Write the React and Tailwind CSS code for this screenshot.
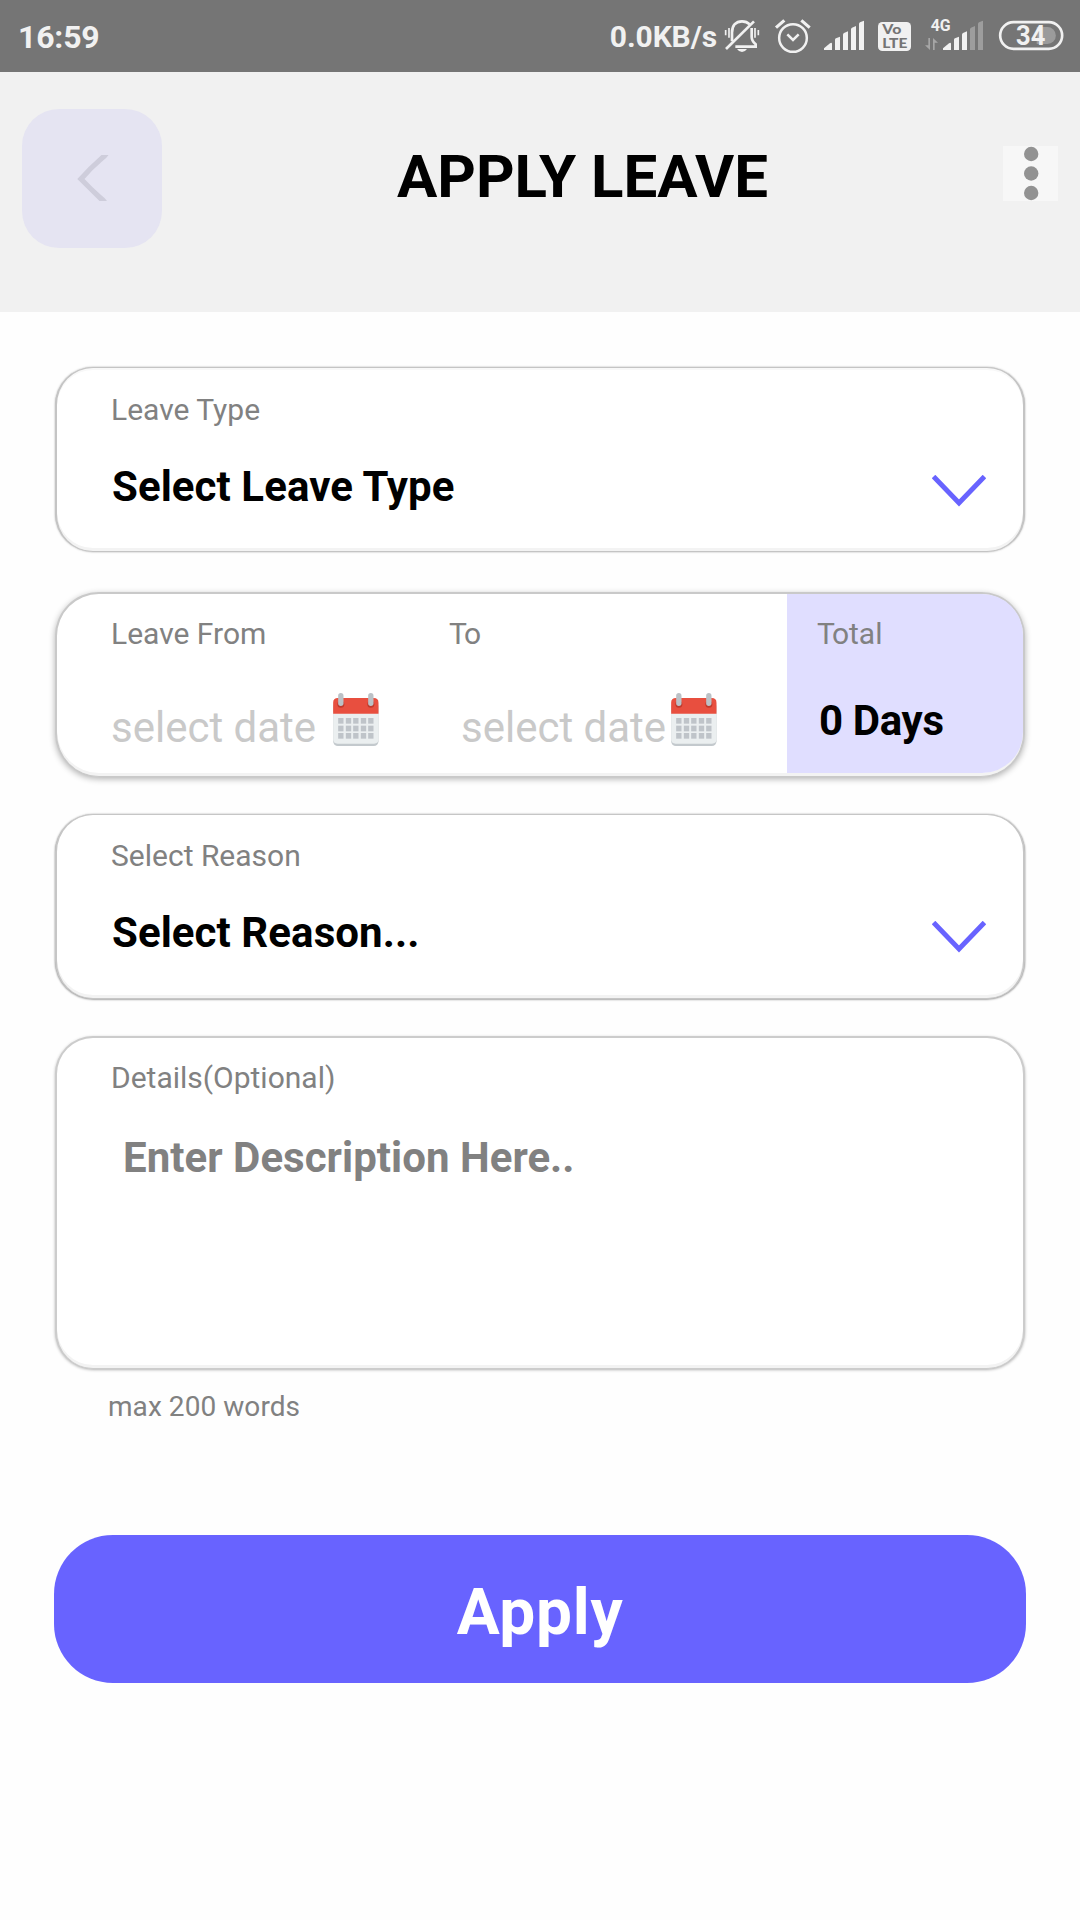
function BellOff() {
  return (
    <svg viewBox="372 54 108 108" className="-mb-[3px] ml-[7px] h-[36px] w-[36px]" fill="none" stroke="#f1f1f1" strokeWidth="8">
      <path d="M396 124V98C396 76 408 64 426 64C435 64 443 67 449 73" />
      <path d="M455 84V110C455 122 459 126 467 133V140H406" />
      <path d="M378 147L462 64" />
      <path d="M411 147H441Q435 156 426 156T411 147Z" fill="#f1f1f1" stroke="none" />
      <path d="M377 90V106M387 84V113M465 84V113M475 90V106" strokeWidth="5" />
    </svg>
  );
}

function Alarm() {
  return (
    <svg viewBox="522 54 114 108" className="-mb-[3px] ml-[14px] h-[36px] w-[38px]" fill="none" stroke="#f1f1f1" strokeWidth="7.500">
      <circle cx="579" cy="114" r="41.500" />
      <path d="M528 83L553 61M604 61L629 83" strokeWidth="9.500" />
      <path d="M562 103L579 120L596 103" />
    </svg>
  );
}

const barPaths = [
  "M12 150V145L30 130Q36 126 36 132V150Z",
  "M45 150V119Q45 116 48 115L60 110V150Z",
  "M69 150V103Q69 101 72 99L84 94V150Z",
  "M93 150V87Q93 85 96 83L108 78V150Z",
  "M117 150V72Q117 69 120 67L132 62V150Z",
];

function SignalBars({ active = 5 }) {
  return barPaths.map((d, i) => <path key={d} d={d} fill={i < active ? "#f1f1f1" : "#9d9d9d"} />);
}

function Volte() {
  return (
    <svg viewBox="174 66 99 87" className="ml-[13px] h-[29px] w-[33px]">
      <rect x="174" y="66" width="99" height="87" rx="13" fill="#f1f1f1" />
      <g fill="#757575" fontFamily="Lato, sans-serif" fontWeight="900">
        <text x="187" y="103" fontSize="39" textLength="57" lengthAdjust="spacingAndGlyphs">Vo</text>
        <text x="187" y="143" fontSize="42" textLength="75" lengthAdjust="spacingAndGlyphs">LTE</text>
      </g>
    </svg>
  );
}

function MobileData() {
  return (
    <svg viewBox="312 30 180 123" className="ml-[13px] h-[41px] w-[60px]">
      <text x="332" y="94" fontSize="50" fontFamily="Roboto, sans-serif" fontWeight="700" fill="#f1f1f1" textLength="60" lengthAdjust="spacingAndGlyphs">4G</text>
      <path d="M325 114H330V150L315 136H325ZM339 150V114L354 128H344V150Z" fill="#a6a6a6" />
      <g transform="translate(357 0)">
        <SignalBars active={3} />
      </g>
    </svg>
  );
}

function Battery() {
  return (
    <svg viewBox="534 60 198 93" className="ml-[14px] h-[31px] w-[66px]">
      <rect x="540.500" y="66.500" width="186" height="80" rx="40" fill="none" stroke="#f1f1f1" strokeWidth="8" />
      <path d="M650 81H682A25.500 25.500 0 0 1 682 132H650Z" fill="#9b9b9b" />
      <text x="588" y="135.500" fontSize="81" fontFamily="Roboto, sans-serif" fontWeight="700" fill="#f1f1f1" textLength="88" lengthAdjust="spacingAndGlyphs">34</text>
    </svg>
  );
}

function StatusBar() {
  return (
    <div className="flex h-[72px] items-end bg-[#757575] pr-[16px] pb-[21px] pl-[18px] font-bold text-[#f1f1f1]">
      <span className="-mb-[5px] text-[32px] leading-[38px] tracking-[-0.2px]">16:59</span>
      <span className="-mb-[3px] ml-auto text-[30px] leading-[35px] tracking-[-0.1px]">0.0KB/s</span>
      <BellOff />
      <Alarm />
      <svg viewBox="9 60 126 93" className="ml-[11px] h-[31px] w-[42px]">
        <SignalBars />
      </svg>
      <Volte />
      <MobileData />
      <Battery />
    </div>
  );
}

function Header() {
  return (
    <header className="flex h-[240px] items-start bg-[#f1f1f1] pr-[22px] pl-[22px]">
      <button className="mt-[37px] flex h-[139px] w-[140px] rounded-[37px] bg-[#e5e4f2]">
        <svg viewBox="0 0 32 46" className="mt-[46px] ml-[54.500px] h-[46px] w-[32px]" fill="#cecddb">
          <path d="M24.500 0H31.500Q30 2.500 25 6.500Q15 15 7.500 24Q15 32 24 40Q28 43 30 46H22.500L0.300 24Q12 11 24.500 0Z" />
        </svg>
      </button>
      <h1 className="mt-[69px] ml-[235px] text-[60px] leading-[71px] font-bold tracking-[-0.05px]">APPLY LEAVE</h1>
      <button className="mt-[74px] ml-auto h-[55px] w-[55px] bg-[#f7f7f7]">
        <svg viewBox="0 0 55 55" className="h-[55px] w-[55px]" fill="#929292">
          <circle cx="28.200" cy="8" r="7.200" />
          <circle cx="28.200" cy="27.500" r="7.200" />
          <circle cx="28.200" cy="47" r="7.200" />
        </svg>
      </button>
    </header>
  );
}

function ChevronDown() {
  return (
    <svg viewBox="0 0 54 32" className="mt-[13px] h-[32px] w-[54px]" fill="none" stroke="#6863ff" strokeWidth="5">
      <path d="M1.500 1.500L27 28L52.500 1.500" />
    </svg>
  );
}

function Calendar({ className }) {
  return (
    <svg viewBox="880 339 137 159" className={className}>
      <rect x="880" y="366" width="136" height="132" rx="14" fill="#c3c9cd" />
      <path d="M880 396H1016V478Q1016 491 1003 491H893Q880 491 880 478Z" fill="#ebeff0" />
      <path d="M880 401V368Q880 354 894 354H1002Q1016 354 1016 368V401Z" fill="#e84f3f" />
      {[903, 993].map((x) => (
        <g key={x}>
          <circle cx={x} cy="373" r="10.500" fill="#bf3a2c" />
          <rect x={x - 8} y="339" width="16" height="39" rx="8" fill="#bcc1c6" />
        </g>
      ))}
      {[414, 437, 459].map((y) =>
        [895, 918, 940, 963, 985].map((x) => (
          <rect key={`${x}-${y}`} x={x} y={y} width="16" height="17" fill="#bfc4c9" />
        ))
      )}
    </svg>
  );
}

function Label({ children }) {
  return <p className="text-[30px] leading-[35px] whitespace-nowrap text-[#818181]">{children}</p>;
}

function SelectCard({ label, value, className }) {
  return (
    <section className={`rounded-[38px] border-x-2 border-t bg-white pr-[37px] pl-[54px] ${className}`}>
      <Label>{label}</Label>
      <div className="mt-[35px] flex items-start justify-between pl-px">
        <span className="text-[42px] leading-[49px] font-bold tracking-[0.07px]">{value}</span>
        <ChevronDown />
      </div>
    </section>
  );
}

export default function App() {
  return (
    <div className="h-[1920px] w-[1080px] overflow-hidden bg-[#fefefe] font-['Roboto',sans-serif] text-black">
      <StatusBar />
      <Header />
      <main className="flex flex-col px-[55px]">
        <SelectCard
          label="Leave Type"
          value="Select Leave Type"
          className="mt-[55px] h-[185px] border-b border-[#c4c4c4] pt-[24px] shadow-[0_0_2px_rgba(0,0,0,0.35),inset_0_2px_0_#f8f8f8,inset_0_-3px_0_#f3f3f3]"
        />

        <section className="mt-[40px] flex h-[185px] rounded-[44px] border-2 border-b border-[#c9c9c9] bg-white shadow-[0_2px_6px_rgba(0,0,0,0.3),inset_0_-3px_0_#f3f3f3]">
          <div className="w-[392px] pt-[22px] pl-[54px]">
            <Label>Leave From</Label>
            <div className="mt-[42px] flex items-start">
              <span className="mt-[10px] text-[42px] leading-[49px] whitespace-nowrap text-[#c9c9c9]">select date</span>
              <Calendar className="ml-[17px] h-[53px] w-[46px] shrink-0" />
            </div>
          </div>
          <div className="w-[338px] pt-[22px]">
            <Label>
              <span className="tracking-[-3px]">T</span>o
            </Label>
            <div className="mt-[42px] flex items-start pl-[12px]">
              <span className="mt-[10px] text-[42px] leading-[49px] whitespace-nowrap text-[#c9c9c9]">select date</span>
              <Calendar className="ml-[5px] h-[53px] w-[46px] shrink-0" />
            </div>
          </div>
          <div className="h-[179px] w-[236px] rounded-r-[41px] bg-[#e0deff] pt-[22px] pl-[30px]">
            <Label>
              <span className="tracking-[-3px]">T</span>otal
            </Label>
            <p className="mt-[45px] pl-[2px] text-[42px] leading-[49px] font-bold tracking-[-0.350px]">0 Days</p>
          </div>
        </section>

        <SelectCard
          label="Select Reason"
          value="Select Reason..."
          className="mt-[37px] h-[185px] border-b border-[#c6c6c6] pt-[23px] shadow-[0_0_2px_rgba(0,0,0,0.3),0_1px_2px_rgba(0,0,0,0.25),inset_0_-3px_0_#f3f3f3]"
        />

        <section className="mt-[37px] h-[333px] rounded-[38px] border-2 border-b border-[#cccccc] bg-white pt-[22px] pl-[54px] shadow-[0_1px_3px_rgba(0,0,0,0.3),inset_0_-3px_0_#f3f3f3]">
          <Label>Details(Optional)</Label>
          <p className="mt-[38px] pl-[12px] text-[42px] leading-[49px] font-bold tracking-[0.03px] text-[#818181]">Enter Description Here..</p>
        </section>
        <p className="mt-[21px] ml-[53px] text-[28px] leading-[33px] tracking-[0.06px] text-[#818181]">max 200 words</p>

        <button className="-mx-px mt-[112px] flex h-[148px] justify-center rounded-[59px] bg-[#6863ff] pt-[40px] text-[64px] leading-[75px] font-bold tracking-[0.7px] text-white">
          Apply
        </button>
      </main>
    </div>
  );
}
